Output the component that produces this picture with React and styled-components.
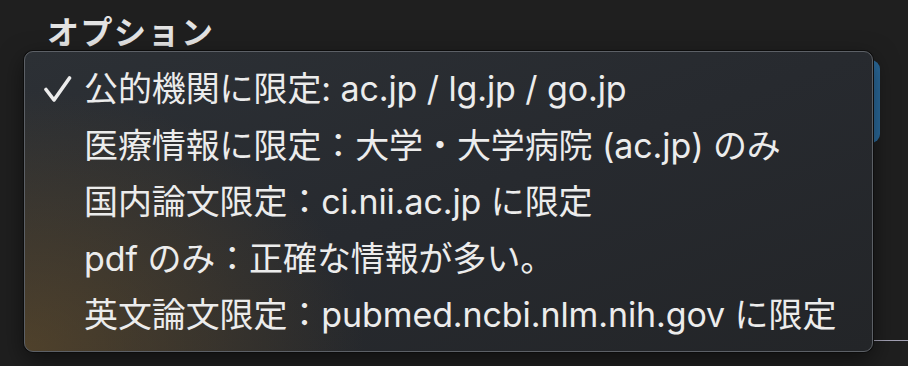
import React from 'react';
import styled, { createGlobalStyle } from 'styled-components';

const Global = createGlobalStyle`
  html, body { margin: 0; padding: 0; background: #1e1e1e; }
  body { width: 908px; height: 366px; overflow: hidden; }
`;

const Page = styled.div`
  position: relative;
  width: 908px;
  height: 366px;
  box-sizing: border-box;
  padding: 11px 0 0 47px;
  background: #1f1f1f;
  overflow: hidden;
`;

const Title = styled.h2`
  margin: 0;
  font: 700 32px/39px "Noto Sans CJK JP", sans-serif;
  letter-spacing: 1.5px;
  color: #e3e3e3;
`;

const SelectTrigger = styled.div`
  margin-top: 10px;
  width: 833px;
  height: 83px;
  border-radius: 9px;
  background: #2b6a9b;
`;

const Divider = styled.div`
  margin-top: 197px;
  width: 861px;
  height: 1px;
  background: #a3a1b4;
`;

const Menu = styled.div`
  position: absolute;
  left: 24px;
  top: 51px;
  width: 849px;
  height: 301px;
  box-sizing: border-box;
  padding: 9px 0 0 0;
  border-radius: 9px;
  border: 1px solid #5c6066;
  box-shadow: 0 0 0 1px #0d0d0d, 0 8px 24px rgba(0, 0, 0, 0.5);
  background:
    radial-gradient(ellipse 340px 260px at 0% 100%, rgba(112, 84, 40, 0.55), rgba(112, 84, 40, 0) 100%),
    linear-gradient(160deg, #2c3035 0%, #272a2f 50%, #232528 100%);
  display: flex;
  flex-direction: column;
`;

const Row = styled.div`
  display: flex;
  align-items: center;
  height: 56.5px;
  font: 400 34px/56px Inter, "Noto Sans CJK JP", sans-serif;
  color: #ececec;
  white-space: nowrap;
`;

const CheckCell = styled.span`
  width: 59px;
  flex: none;
  display: flex;
  align-items: center;
  padding-left: 19px;
  box-sizing: border-box;
`;

const Label = styled.span`
  letter-spacing: -0.1px;
`;

const Check = () => (
  <svg width="28" height="26" viewBox="0 0 28 26" fill="none">
    <path d="M2 13.5 L10 24 L25.5 2" stroke="#ececec" strokeWidth="3.6" strokeLinecap="round" strokeLinejoin="round" />
  </svg>
);

const items = [
  { label: '公的機関に限定: ac.jp / lg.jp / go.jp', checked: true },
  { label: '医療情報に限定：大学・大学病院 (ac.jp) のみ' },
  { label: '国内論文限定：ci.nii.ac.jp に限定' },
  { label: 'pdf のみ：正確な情報が多い。' },
  { label: '英文論文限定：pubmed.ncbi.nlm.nih.gov に限定' },
];

export default function App() {
  return (
    <>
      <Global />
      <Page>
        <Title>オプション</Title>
        <SelectTrigger />
        <Divider />
        <Menu>
          {items.map((it) => (
            <Row key={it.label}>
              <CheckCell>{it.checked ? <Check /> : null}</CheckCell>
              <Label>{it.label}</Label>
            </Row>
          ))}
        </Menu>
      </Page>
    </>
  );
}
